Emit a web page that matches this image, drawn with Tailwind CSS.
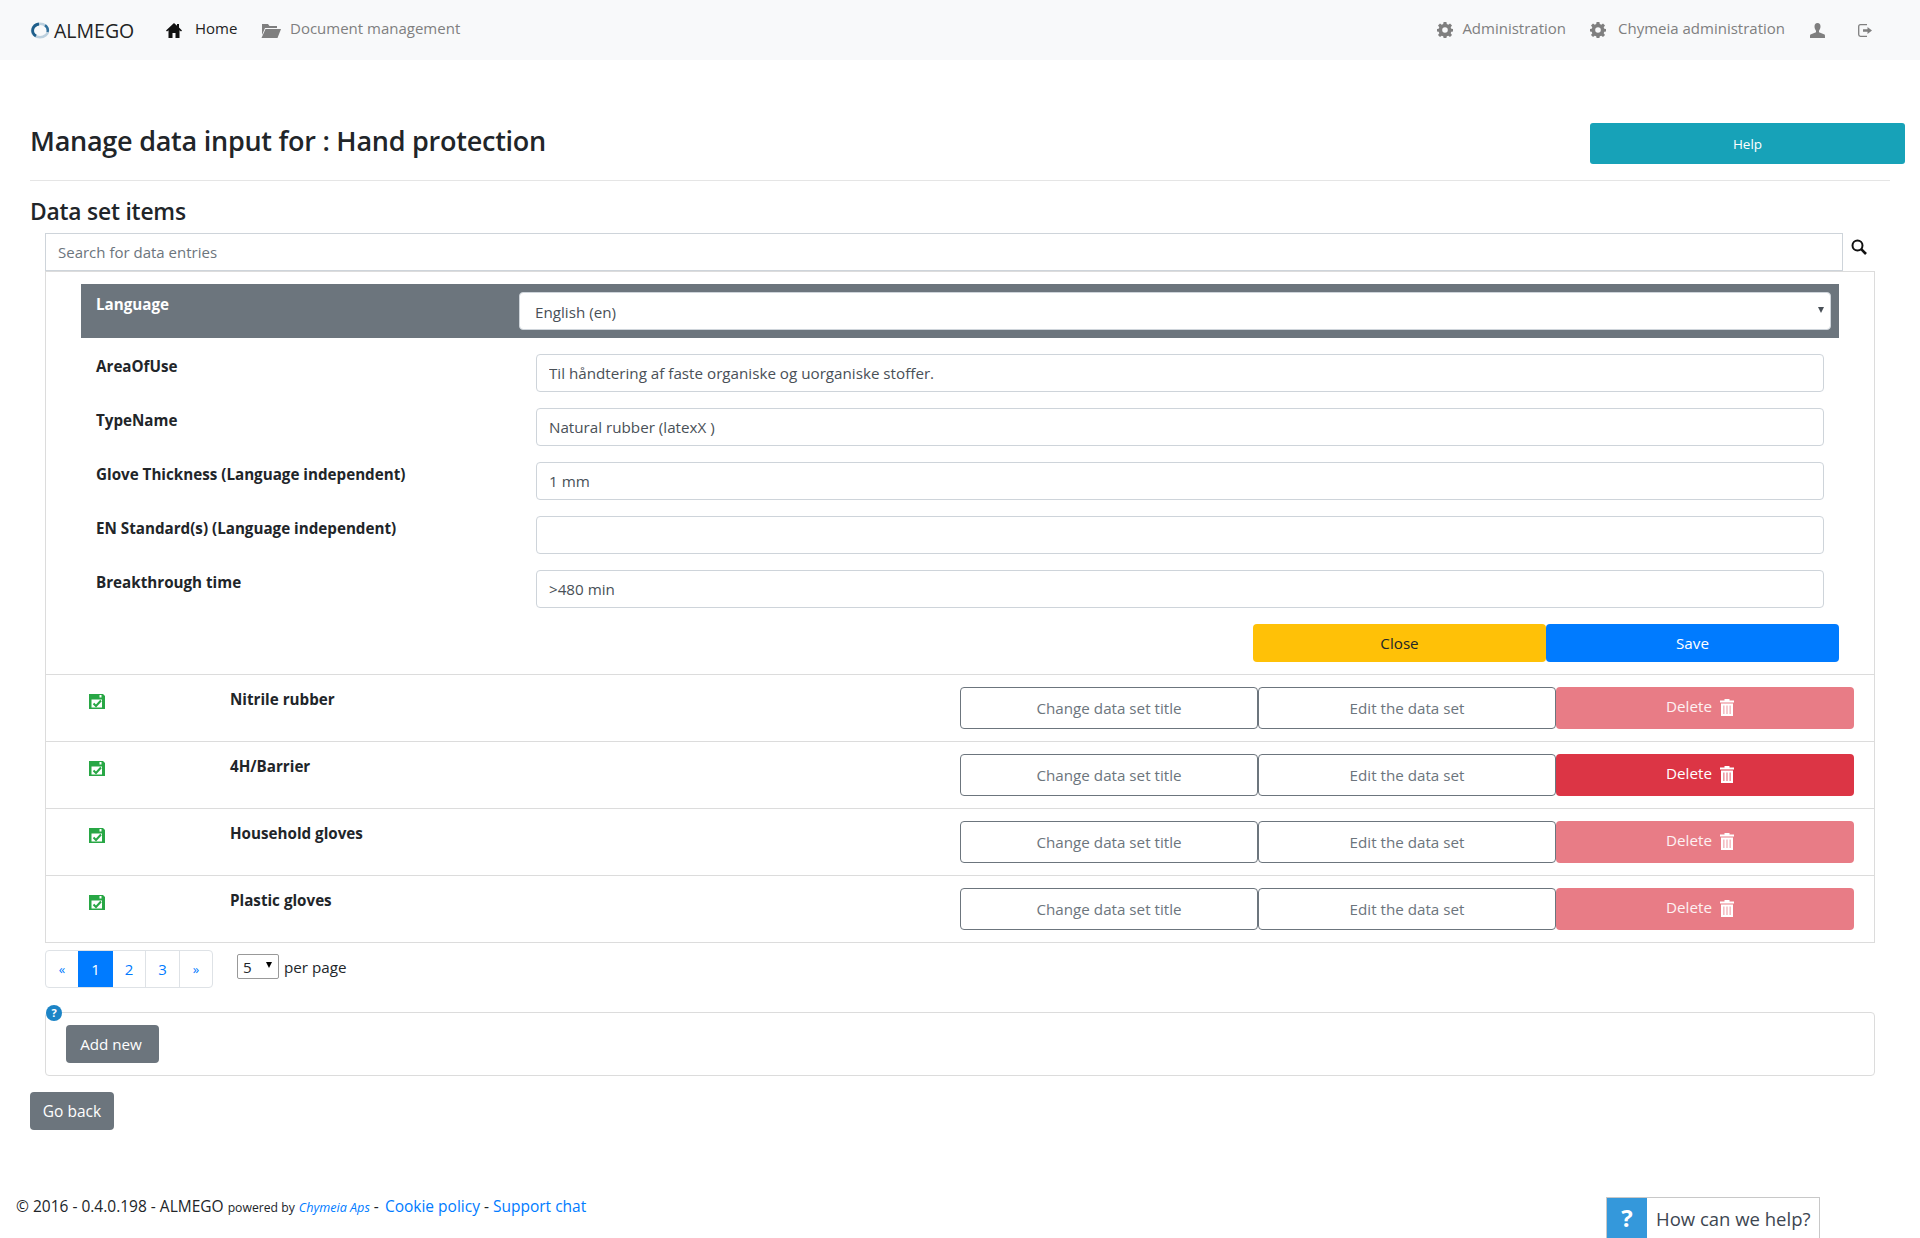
<!DOCTYPE html>
<html lang="en">
<head>
  <meta charset="UTF-8">
  <title>ALMEGO - Manage data input</title>
  <script src="https://cdn.jsdelivr.net/npm/@tailwindcss/browser@4"></script>
</head>
<body class="bg-white text-[#212529] text-[15.2px] font-['Open_Sans',sans-serif] h-[1238px] overflow-hidden relative">

  <!-- navbar -->
  <nav class="h-[60px] bg-[#f8f9fa] flex items-center pl-[30px] pr-[48px] text-[15px] text-[#7f7f7f]">
    <svg class="w-[20px] h-[17px]" viewBox="0 0 20 17" fill="none"><ellipse cx="10" cy="8.500" rx="8" ry="6.700" stroke="#bcd0de" stroke-width="2.600"/><path d="M6 14A8 6.700 0 0 1 9 2" stroke="#1f5f8b" stroke-width="2.800"/><path d="M15 3.300A8 6.700 0 0 1 17.500 10" stroke="#2f6f9b" stroke-width="2.400"/></svg>
    <span class="ml-[4px] w-[89px] text-[19.500px] text-[#222] mt-[1px]">ALMEGO</span>
    <svg class="ml-[23px] w-[16px] h-[15px]" viewBox="0 0 16 15" fill="#111"><path d="M8 0 0 7.500 1 8.500 2.500 7.300V15H6.500V10H9.500V15H13.500V7.300L15 8.500 16 7.500 13 4.600V1H11V2.800Z"/></svg>
    <span class="ml-[13px] w-[66px] text-[#222] mb-[3px]">Home</span>
    <svg class="w-[20px] h-[15px]" viewBox="0 0 20 15" fill="#7f7f7f"><path d="M1 1H7L8.500 3H16V5H4L1 12Z"/><path d="M4.500 6H20L16.500 15H0.500Z"/></svg>
    <span class="ml-[9px] mb-[3px]">Document management</span>

    <div class="ml-auto flex items-center">
      <svg class="w-[16px] h-[16px]" viewBox="0 0 16 16"><path fill="#7f7f7f" fill-rule="evenodd" d="M6.600 0H9.400L9.800 2.100 11.300 2.700 13 1.500 15 3.500 13.700 5.200 14.300 6.700 16 7V9.400L14.300 9.800 13.700 11.300 15 13 13 15 11.300 13.700 9.800 14.300 9.400 16H6.600L6.200 14.300 4.700 13.700 3 15 1 13 2.300 11.300 1.700 9.800 0 9.400V7L1.700 6.700 2.300 5.200 1 3.500 3 1.500 4.700 2.700 6.200 2.100ZM8 5.200A2.800 2.800 0 1 0 8 10.800 2.800 2.800 0 1 0 8 5.200Z"/></svg>
      <span class="ml-[9px] mb-[3px]">Administration</span>
      <svg class="ml-[24px] w-[16px] h-[16px]" viewBox="0 0 16 16"><path fill="#7f7f7f" fill-rule="evenodd" d="M6.600 0H9.400L9.800 2.100 11.300 2.700 13 1.500 15 3.500 13.700 5.200 14.300 6.700 16 7V9.400L14.300 9.800 13.700 11.300 15 13 13 15 11.300 13.700 9.800 14.300 9.400 16H6.600L6.200 14.300 4.700 13.700 3 15 1 13 2.300 11.300 1.700 9.800 0 9.400V7L1.700 6.700 2.300 5.200 1 3.500 3 1.500 4.700 2.700 6.200 2.100ZM8 5.200A2.800 2.800 0 1 0 8 10.800 2.800 2.800 0 1 0 8 5.200Z"/></svg>
      <span class="ml-[12px] mb-[3px]">Chymeia administration</span>
      <svg class="ml-[25px] w-[15px] h-[15px]" viewBox="0 0 15 15" fill="#7f7f7f"><path d="M7.500 0C5.500 0 4.500 1.500 4.500 3.500 4.500 5.500 5.500 7 6 7.800V9.300L0.500 11.500C0 11.800 0 12.500 0 15H15C15 12.500 15 11.800 14.500 11.500L9 9.300V7.800C9.500 7 10.500 5.500 10.500 3.500 10.500 1.500 9.500 0 7.500 0Z"/></svg>
      <svg class="ml-[33px] w-[14px] h-[13px]" viewBox="0 0 14 13" fill="none" stroke="#7f7f7f" stroke-width="1.300"><path d="M9 .7H2.500Q.7.7.7 2.500V10.500Q.7 12.300 2.500 12.300H9"/><path fill="#7f7f7f" stroke="none" d="M5 5.200H9.500V3L14 6.500 9.500 10V7.800H5Z"/></svg>
    </div>
  </nav>

  <main class="px-[30px]">
    <!-- page title -->
    <div class="w-[1875px] flex justify-between pt-[63px]">
      <h1 class="text-[27px] font-semibold leading-[35px] tracking-[-0.25px]">Manage data input for : Hand protection</h1>
      <button class="w-[315px] h-[41px] rounded-[3px] bg-[#17a2b8] text-white text-[13.500px] pt-[1px]">Help</button>
    </div>
    <hr class="mt-[16px] border-[#e5e5e5]">

    <h2 class="mt-[13px] h-[39px] text-[22.800px] font-semibold leading-[36px] tracking-[-0.2px]">Data set items</h2>

    <!-- search -->
    <div class="ml-[15px] flex">
      <input class="w-[1798px] h-[38px] border border-[#ced4da] px-[12px] text-[15px] placeholder-[#6c757d] outline-none" placeholder="Search for data entries">
      <svg class="ml-[8px] mt-[6px] w-[16px] h-[16px]" viewBox="0 0 16 16" fill="none" stroke="#111" stroke-width="2"><circle cx="6.500" cy="6.500" r="5"/><path d="M10.200 10.200 15 15" stroke-width="2.600"/></svg>
    </div>

    <!-- data set card -->
    <div class="ml-[15px] w-[1830px] border border-[#dcdcdc] pt-[12px]">
      <div class="ml-[35px] w-[1758px] h-[54px] bg-[#6c757d] flex text-white">
        <label class="w-[438px] pl-[15px] pt-[9px] font-bold">Language</label>
        <div class="relative mt-[8px]">
          <select class="w-[1312px] h-[38px] rounded-[4px] bg-white border border-[#ced4da] pl-[15px] pt-[2px] text-[#495057] appearance-none">
            <option>English (en)</option>
          </select>
          <span class="absolute right-[7px] top-[15px] w-0 h-0 border-x-[3px] border-x-transparent border-t-[6px] border-t-[#495057]"></span>
        </div>
      </div>

      <div class="mt-[16px] ml-[35px] pl-[15px] flex flex-col gap-[16px]">
        <div class="flex h-[38px]">
          <label class="w-[440px] pt-[1px] font-bold">AreaOfUse</label>
          <input class="w-[1288px] border border-[#ced4da] rounded-[4px] px-[12px] pt-[1px] text-[#495057]" value="Til håndtering af faste organiske og uorganiske stoffer.">
        </div>
        <div class="flex h-[38px]">
          <label class="w-[440px] pt-[1px] font-bold">TypeName</label>
          <input class="w-[1288px] border border-[#ced4da] rounded-[4px] px-[12px] pt-[1px] text-[#495057]" value="Natural rubber (latexX )">
        </div>
        <div class="flex h-[38px]">
          <label class="w-[440px] pt-[1px] font-bold">Glove Thickness (Language independent)</label>
          <input class="w-[1288px] border border-[#ced4da] rounded-[4px] px-[12px] pt-[1px] text-[#495057]" value="1 mm">
        </div>
        <div class="flex h-[38px]">
          <label class="w-[440px] pt-[1px] font-bold">EN Standard(s) (Language independent)</label>
          <input class="w-[1288px] border border-[#ced4da] rounded-[4px] px-[12px] pt-[1px] text-[#495057]">
        </div>
        <div class="flex h-[38px]">
          <label class="w-[440px] pt-[1px] font-bold">Breakthrough time</label>
          <input class="w-[1288px] border border-[#ced4da] rounded-[4px] px-[12px] pt-[1px] text-[#495057]" value="&gt;480 min">
        </div>
      </div>

      <div class="mt-[16px] ml-[35px] w-[1758px] flex justify-end">
        <button class="w-[293px] h-[38px] rounded-[4px] bg-[#ffc107] text-[#212529] pt-[1px]">Close</button>
        <button class="w-[293px] h-[38px] rounded-[4px] bg-[#007bff] text-white pt-[1px]">Save</button>
      </div>

      <!-- items -->
      <div class="mt-[12px] flex flex-col">
        <div class="h-[67px] border-t border-[#dcdcdc] flex pl-[43px] pr-[20px] pt-[12px]">
          <svg class="mt-[7px] w-[16px] h-[15px]" viewBox="0 0 16 15"><path fill="#28a745" d="M0 0H14L16 2V15H0Z"/><path fill="#fff" d="M10.500 1H12.500V3.500H10.500ZM2.500 5.500H13V13.500H2.500Z"/><path fill="none" stroke="#28a745" stroke-width="2" d="M4.500 9.500 7 12 12 6.500"/></svg>
          <span class="ml-[125px] mt-[1px] font-bold">Nitrile rubber</span>
          <div class="ml-auto flex">
            <button class="w-[298px] h-[42px] border border-[#6c757d] rounded-[4px] text-[#6c757d] pt-[1px]">Change data set title</button>
            <button class="w-[298px] h-[42px] border border-[#6c757d] rounded-[4px] text-[#6c757d] pt-[1px]">Edit the data set</button>
            <button class="w-[298px] h-[42px] rounded-[4px] bg-[#e87c86] text-white/90 flex items-center justify-center gap-[8px] pr-[10px]"><span class="mb-[3px]">Delete</span>
              <svg class="w-[14px] h-[17px] mb-[1px]" viewBox="0 0 14 17"><path fill="#fff" fill-rule="evenodd" d="M4.500 0H9.500V1.500H14V3.500H0V1.500H4.500ZM1 4.500H13V17H1ZM3.500 6.500V15H4.300V6.500ZM6.600 6.500V15H7.400V6.500ZM9.700 6.500V15H10.500V6.500Z"/></svg>
            </button>
          </div>
        </div>
        <div class="h-[67px] border-t border-[#dcdcdc] flex pl-[43px] pr-[20px] pt-[12px]">
          <svg class="mt-[7px] w-[16px] h-[15px]" viewBox="0 0 16 15"><path fill="#28a745" d="M0 0H14L16 2V15H0Z"/><path fill="#fff" d="M10.500 1H12.500V3.500H10.500ZM2.500 5.500H13V13.500H2.500Z"/><path fill="none" stroke="#28a745" stroke-width="2" d="M4.500 9.500 7 12 12 6.500"/></svg>
          <span class="ml-[125px] mt-[1px] font-bold">4H/Barrier</span>
          <div class="ml-auto flex">
            <button class="w-[298px] h-[42px] border border-[#6c757d] rounded-[4px] text-[#6c757d] pt-[1px]">Change data set title</button>
            <button class="w-[298px] h-[42px] border border-[#6c757d] rounded-[4px] text-[#6c757d] pt-[1px]">Edit the data set</button>
            <button class="w-[298px] h-[42px] rounded-[4px] bg-[#dc3545] text-white flex items-center justify-center gap-[8px] pr-[10px]"><span class="mb-[3px]">Delete</span>
              <svg class="w-[14px] h-[17px] mb-[1px]" viewBox="0 0 14 17"><path fill="#fff" fill-rule="evenodd" d="M4.500 0H9.500V1.500H14V3.500H0V1.500H4.500ZM1 4.500H13V17H1ZM3.500 6.500V15H4.300V6.500ZM6.600 6.500V15H7.400V6.500ZM9.700 6.500V15H10.500V6.500Z"/></svg>
            </button>
          </div>
        </div>
        <div class="h-[67px] border-t border-[#dcdcdc] flex pl-[43px] pr-[20px] pt-[12px]">
          <svg class="mt-[7px] w-[16px] h-[15px]" viewBox="0 0 16 15"><path fill="#28a745" d="M0 0H14L16 2V15H0Z"/><path fill="#fff" d="M10.500 1H12.500V3.500H10.500ZM2.500 5.500H13V13.500H2.500Z"/><path fill="none" stroke="#28a745" stroke-width="2" d="M4.500 9.500 7 12 12 6.500"/></svg>
          <span class="ml-[125px] mt-[1px] font-bold">Household gloves</span>
          <div class="ml-auto flex">
            <button class="w-[298px] h-[42px] border border-[#6c757d] rounded-[4px] text-[#6c757d] pt-[1px]">Change data set title</button>
            <button class="w-[298px] h-[42px] border border-[#6c757d] rounded-[4px] text-[#6c757d] pt-[1px]">Edit the data set</button>
            <button class="w-[298px] h-[42px] rounded-[4px] bg-[#e87c86] text-white/90 flex items-center justify-center gap-[8px] pr-[10px]"><span class="mb-[3px]">Delete</span>
              <svg class="w-[14px] h-[17px] mb-[1px]" viewBox="0 0 14 17"><path fill="#fff" fill-rule="evenodd" d="M4.500 0H9.500V1.500H14V3.500H0V1.500H4.500ZM1 4.500H13V17H1ZM3.500 6.500V15H4.300V6.500ZM6.600 6.500V15H7.400V6.500ZM9.700 6.500V15H10.500V6.500Z"/></svg>
            </button>
          </div>
        </div>
        <div class="h-[67px] border-t border-[#dcdcdc] flex pl-[43px] pr-[20px] pt-[12px]">
          <svg class="mt-[7px] w-[16px] h-[15px]" viewBox="0 0 16 15"><path fill="#28a745" d="M0 0H14L16 2V15H0Z"/><path fill="#fff" d="M10.500 1H12.500V3.500H10.500ZM2.500 5.500H13V13.500H2.500Z"/><path fill="none" stroke="#28a745" stroke-width="2" d="M4.500 9.500 7 12 12 6.500"/></svg>
          <span class="ml-[125px] mt-[1px] font-bold">Plastic gloves</span>
          <div class="ml-auto flex">
            <button class="w-[298px] h-[42px] border border-[#6c757d] rounded-[4px] text-[#6c757d] pt-[1px]">Change data set title</button>
            <button class="w-[298px] h-[42px] border border-[#6c757d] rounded-[4px] text-[#6c757d] pt-[1px]">Edit the data set</button>
            <button class="w-[298px] h-[42px] rounded-[4px] bg-[#e87c86] text-white/90 flex items-center justify-center gap-[8px] pr-[10px]"><span class="mb-[3px]">Delete</span>
              <svg class="w-[14px] h-[17px] mb-[1px]" viewBox="0 0 14 17"><path fill="#fff" fill-rule="evenodd" d="M4.500 0H9.500V1.500H14V3.500H0V1.500H4.500ZM1 4.500H13V17H1ZM3.500 6.500V15H4.300V6.500ZM6.600 6.500V15H7.400V6.500ZM9.700 6.500V15H10.500V6.500Z"/></svg>
            </button>
          </div>
        </div>
      </div>
    </div>

    <!-- pagination -->
    <div class="ml-[15px] mt-[7px] flex">
      <div class="h-[38px] flex border border-[#dee2e6] rounded-[4px] text-[#007bff] text-[15px] leading-[36px] text-center">
        <span class="w-[32px] text-[13px]">«</span>
        <span class="w-[35px] bg-[#007bff] text-white">1</span>
        <span class="w-[33px] border-r border-[#dee2e6]">2</span>
        <span class="w-[34px] border-r border-[#dee2e6]">3</span>
        <span class="w-[32px] text-[13px]">»</span>
      </div>
      <div class="relative ml-[24px] mt-[4px]">
        <select class="w-[42px] h-[25px] border border-[#999] rounded-[2px] pl-[5px] pt-[1px] text-[#212529] appearance-none bg-white">
          <option>5</option>
        </select>
        <span class="absolute right-[7px] top-[8px] w-0 h-0 border-x-[3.500px] border-x-transparent border-t-[6px] border-t-black"></span>
      </div>
      <span class="ml-[5px] mt-[6px]">per page</span>
    </div>

    <!-- add new -->
    <div class="relative ml-[15px] mt-[24px] w-[1830px] h-[64px] border border-[#dcdcdc] rounded-[4px] pl-[20px] pt-[12px]">
      <span class="absolute left-[0px] top-[-8px] w-[16px] h-[16px] rounded-full bg-[#1c84c6] text-white text-[11px] font-bold leading-[16px] text-center">?</span>
      <button class="w-[93px] h-[38px] rounded-[4px] bg-[#6c757d] text-white text-[15.200px] pr-[3px] pt-[1px]">Add new</button>
    </div>

    <button class="block mt-[16px] w-[84px] h-[38px] rounded-[4px] bg-[#6c757d] text-white text-[15.500px] pt-[1px]">Go back</button>
  </main>

  <!-- footer -->
  <footer class="mt-[64px] pl-[16px] h-[24px] leading-[24px] text-[15.500px] whitespace-nowrap">
    © 2016 - 0.4.0.198 - ALMEGO <span class="text-[12.200px]">powered by</span> <a class="text-[12.600px] italic text-[#007bff]">Chymeia Aps</a> - <a class="text-[#007bff] ml-[2px]">Cookie policy</a> - <a class="text-[#007bff]">Support chat</a>
  </footer>

  <!-- chat widget -->
  <div class="fixed left-[1606px] bottom-0 w-[214px] h-[41px] bg-white border border-b-0 border-[#c8c8c8] flex">
    <span class="w-[40px] bg-[#3498db] text-white text-[24px] font-bold leading-[40px] text-center">?</span>
    <span class="ml-[9px] text-[18.500px] text-[#3d4651] leading-[42px] whitespace-nowrap">How can we help?</span>
  </div>

</body>
</html>
